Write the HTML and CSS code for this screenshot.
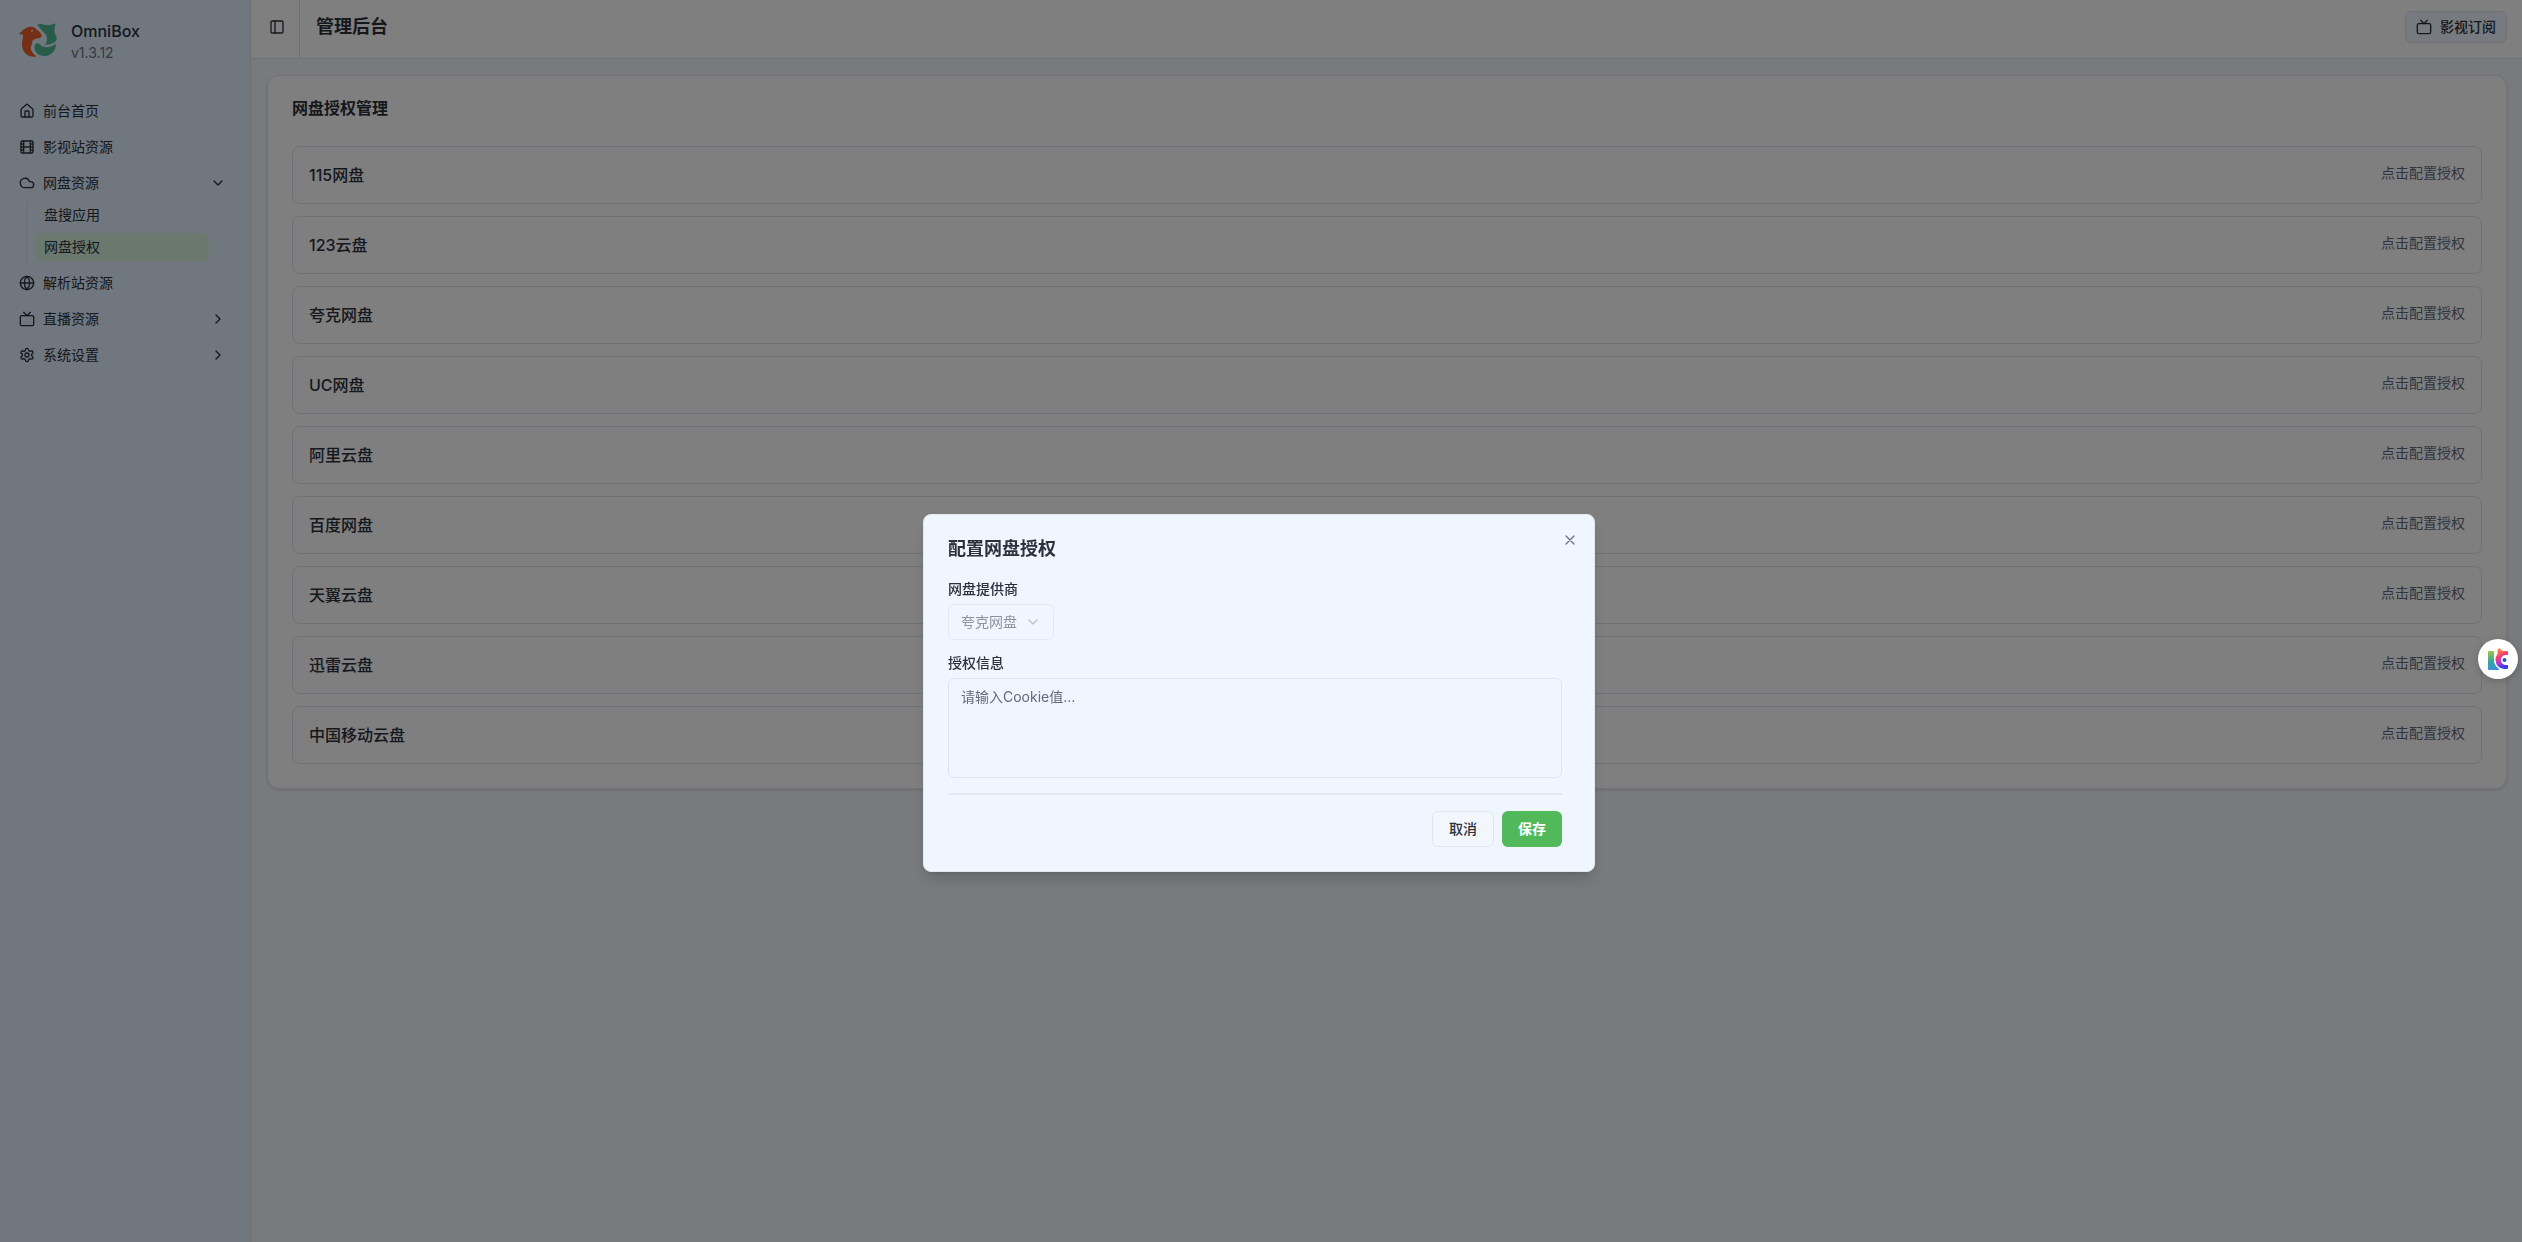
FILE: index.html
```
<!DOCTYPE html>
<html lang="zh-CN">
  <head>
    <meta charset="UTF-8" />
    <meta name="viewport" content="width=device-width, initial-scale=1.0" />
    <title>OmniBox</title>
    <link rel="stylesheet" href="styles.css">
  </head>
  <body>
    <div class="layout">
      <aside class="sidebar">
        <div class="brand">
          <svg class="logo" viewBox="0 0 40 36">
            <path fill="#e85f28" d="M0 10.500C3 9 5 5 10 4C14 3 16 5 18 7C21 9 23 11 22.500 14C20 16 17 15 15 16.500C12 18 14 21 12 23C11 27 14 31 17.500 33.500C10 34.500 5 31 3.500 25C2 19 4.500 15 4 12C3 11 1 12 0 10.500Z" />
            <path fill="#4fb890" d="M18 2C21 0 24 1.500 27 2C29 3 32 1.500 36.500 0.500C36 4 35 7 35.500 9C36 12 38.500 14 37.500 17C36 20 31 22 26 21.500C29 18 28.500 13 25.500 10C22 7 21 4 18 2Z" />
            <path fill="#4fb890" d="M15.500 25C15 21 18 19 20.500 21C24 25.500 31 25 37 21C37 28 32 32.500 26 33C20 33 16 30 15.500 25Z" />
            <circle cx="13" cy="7.800" r="0.900" fill="#fff" />
          </svg>
          <div>
            <div class="brand-name">OmniBox</div>
            <div class="brand-version">v1.3.12</div>
          </div>
        </div>

        <nav class="menu">
          <a class="menu-item">
            <svg class="icon" viewBox="0 0 24 24"><path d="M15 21v-8a1 1 0 0 0-1-1h-4a1 1 0 0 0-1 1v8" /><path d="M3 10a2 2 0 0 1 .7-1.5l7-6a2 2 0 0 1 2.6 0l7 6A2 2 0 0 1 21 10v9a2 2 0 0 1-2 2H5a2 2 0 0 1-2-2z" /></svg>
            <span>前台首页</span>
          </a>
          <a class="menu-item">
            <svg class="icon" viewBox="0 0 24 24"><rect width="18" height="18" x="3" y="3" rx="2" /><path d="M7 3v18M3 7.500h4M3 12h18M3 16.500h4M17 3v18M17 7.500h4M17 16.500h4" /></svg>
            <span>影视站资源</span>
          </a>
          <a class="menu-item">
            <svg class="icon" viewBox="0 0 24 24"><path d="M17.500 19H9a7 7 0 1 1 6.710-9h1.790a4.500 4.500 0 1 1 0 9Z" /></svg>
            <span>网盘资源</span>
            <svg class="icon chevron" viewBox="0 0 24 24"><path d="m6 9 6 6 6-6" /></svg>
          </a>
          <div class="submenu">
            <a class="submenu-item">盘搜应用</a>
            <a class="submenu-item active">网盘授权</a>
          </div>
          <a class="menu-item">
            <svg class="icon" viewBox="0 0 24 24"><circle cx="12" cy="12" r="10" /><path d="M12 2a14.500 14.500 0 0 0 0 20 14.500 14.500 0 0 0 0-20M2 12h20" /></svg>
            <span>解析站资源</span>
          </a>
          <a class="menu-item">
            <svg class="icon" viewBox="0 0 24 24"><rect width="20" height="15" x="2" y="7" rx="2" /><path d="m17 2-5 5-5-5" /></svg>
            <span>直播资源</span>
            <svg class="icon chevron" viewBox="0 0 24 24"><path d="m9 18 6-6-6-6" /></svg>
          </a>
          <a class="menu-item">
            <svg class="icon" viewBox="0 0 24 24"><path d="M12.220 2h-.44a2 2 0 0 0-2 2v.18a2 2 0 0 1-1 1.730l-.43.25a2 2 0 0 1-2 0l-.15-.08a2 2 0 0 0-2.730.73l-.22.38a2 2 0 0 0 .73 2.730l.15.1a2 2 0 0 1 1 1.720v.51a2 2 0 0 1-1 1.740l-.15.09a2 2 0 0 0-.73 2.730l.22.38a2 2 0 0 0 2.730.73l.15-.08a2 2 0 0 1 2 0l.43.25a2 2 0 0 1 1 1.730V20a2 2 0 0 0 2 2h.44a2 2 0 0 0 2-2v-.18a2 2 0 0 1 1-1.730l.43-.25a2 2 0 0 1 2 0l.15.08a2 2 0 0 0 2.730-.73l.22-.39a2 2 0 0 0-.73-2.730l-.15-.08a2 2 0 0 1-1-1.740v-.5a2 2 0 0 1 1-1.740l.15-.09a2 2 0 0 0 .73-2.730l-.22-.38a2 2 0 0 0-2.730-.73l-.15.08a2 2 0 0 1-2 0l-.43-.25a2 2 0 0 1-1-1.730V4a2 2 0 0 0-2-2z" /><circle cx="12" cy="12" r="3" /></svg>
            <span>系统设置</span>
            <svg class="icon chevron" viewBox="0 0 24 24"><path d="m9 18 6-6-6-6" /></svg>
          </a>
        </nav>
      </aside>

      <main class="main">
        <header class="topbar">
          <div class="toggle">
            <svg class="icon" viewBox="0 0 24 24"><rect width="18" height="18" x="3" y="3" rx="2" /><path d="M9 3v18" /></svg>
          </div>
          <h1>管理后台</h1>
          <button class="subscribe">
            <svg class="icon" viewBox="0 0 24 24"><rect width="20" height="15" x="2" y="7" rx="2" /><path d="m17 2-5 5-5-5" /></svg>
            影视订阅
          </button>
        </header>

        <section class="card">
          <h2>网盘授权管理</h2>
          <div class="drive-list">
            <div class="drive"><h3>115网盘</h3><span>点击配置授权</span></div>
            <div class="drive"><h3>123云盘</h3><span>点击配置授权</span></div>
            <div class="drive"><h3>夸克网盘</h3><span>点击配置授权</span></div>
            <div class="drive"><h3>UC网盘</h3><span>点击配置授权</span></div>
            <div class="drive"><h3>阿里云盘</h3><span>点击配置授权</span></div>
            <div class="drive"><h3>百度网盘</h3><span>点击配置授权</span></div>
            <div class="drive"><h3>天翼云盘</h3><span>点击配置授权</span></div>
            <div class="drive"><h3>迅雷云盘</h3><span>点击配置授权</span></div>
            <div class="drive"><h3>中国移动云盘</h3><span>点击配置授权</span></div>
          </div>
        </section>
      </main>
    </div>

    <div class="overlay">
      <div class="dialog">
        <svg class="icon close" viewBox="0 0 24 24"><path d="M18 6 6 18M6 6l12 12" /></svg>
        <h2>配置网盘授权</h2>
        <label>网盘提供商</label>
        <div class="select">
          夸克网盘
          <svg class="icon" viewBox="0 0 24 24"><path d="m6 9 6 6 6-6" /></svg>
        </div>
        <label>授权信息</label>
        <textarea placeholder="请输入Cookie值..."></textarea>
        <div class="actions">
          <button class="btn">取消</button>
          <button class="btn primary">保存</button>
        </div>
      </div>
    </div>

    <div class="float-badge">
      <svg viewBox="0 0 20 22">
        <defs>
          <linearGradient id="gl" x1="0" y1="0" x2="0" y2="1"><stop offset="0" stop-color="#9cc63c" /><stop offset="0.55" stop-color="#35a79b" /><stop offset="1" stop-color="#3b8edb" /></linearGradient>
          <linearGradient id="gc" x1="0" y1="0" x2="0.3" y2="1"><stop offset="0" stop-color="#fbb034" /><stop offset="0.45" stop-color="#f5426c" /><stop offset="0.75" stop-color="#a53be0" /><stop offset="1" stop-color="#3c3ce8" /></linearGradient>
        </defs>
        <path fill="url(#gl)" d="M1 3h4q1 0 1 1v10q1 4 5 7v1H1q-1 0-1-1V4q0-1 1-1z" />
        <path fill="url(#gc)" d="M9.500 1.500l2-1.500 3 3H19q1 0 1 1v3h-3q-4 1-4 5t4 5h3v3q0 1-1 1h-3q-8-1-8.500-9 0-4 2-6z" />
        <circle cx="16.500" cy="12" r="2" fill="#2458b8" />
      </svg>
    </div>
  </body>
</html>
```
FILE: styles.css
```
* {
  box-sizing: border-box;
}

body {
  margin: 0;
  font-family: Inter, "Noto Sans CJK SC", sans-serif;
  font-size: 14px;
  line-height: 20px;
  color: #2b303b;
  background: #f1f5fb;
}

h1,
h2,
h3 {
  margin: 0;
  font-weight: 600;
}

.icon {
  width: 16px;
  height: 16px;
  flex: none;
  fill: none;
  stroke: currentColor;
  stroke-width: 2;
  stroke-linecap: round;
  stroke-linejoin: round;
}

.layout {
  display: flex;
  height: 100vh;
}

/* sidebar */
.sidebar {
  width: 251px;
  flex: none;
  padding: 16px;
  border-right: 1px solid #dadee4;
  background: #e0effc;
}

.brand {
  display: flex;
  align-items: center;
  gap: 12px;
  height: 50px;
  padding-left: 3px;
}

.logo {
  width: 40px;
  height: 36px;
}

.brand-name {
  font-size: 16px;
  line-height: 24px;
  font-weight: 500;
}

.brand-version {
  color: #6c7280;
}

.menu {
  margin-top: 27px;
}

.menu-item {
  display: flex;
  align-items: center;
  gap: 8px;
  height: 36px;
  padding: 0 8px 0 3px;
}

.chevron {
  margin-left: auto;
}

.submenu {
  margin: 0 25px 0 10px;
  padding: 0 0 4px 9px;
  border-left: 1px solid #dadee4;
}

.submenu-item {
  display: flex;
  align-items: center;
  height: 28px;
  padding-left: 8px;
  border-radius: 6px;
}

.submenu-item + .submenu-item {
  margin-top: 4px;
}

.submenu-item.active {
  background: #d4f0dc;
}

/* main */
.main {
  flex: 1;
  min-width: 0;
}

.topbar {
  display: flex;
  align-items: center;
  height: 59px;
  padding-right: 15px;
  padding-bottom: 5px;
  border-bottom: 1px solid #dfe3ea;
  background: #fff;
}

.toggle {
  display: flex;
  align-items: center;
  justify-content: center;
  align-self: stretch;
  width: 49px;
  margin-bottom: -5px;
  padding: 0 0 5px 3px;
  border-right: 1px solid #dfe3ea;
}

.topbar h1 {
  margin-left: 16px;
  font-size: 18px;
  line-height: 28px;
}

.subscribe {
  display: flex;
  align-items: center;
  gap: 8px;
  height: 32px;
  margin-left: auto;
  padding: 0 10px;
  border: 1px solid #dfe3ea;
  border-radius: 6px;
  background: #eff6ff;
  color: inherit;
  font: inherit;
  font-weight: 500;
}

.card {
  margin: 16px 15px 0 16px;
  padding: 20px 24px 24px;
  border: 1px solid #e5e7eb;
  border-radius: 12px;
  background: #fff;
  box-shadow: 0 1px 3px rgba(0, 0, 0, 0.15);
}

.card h2 {
  font-size: 16px;
  line-height: 24px;
}

.drive-list {
  display: grid;
  gap: 12px;
  margin-top: 26px;
}

.drive {
  display: flex;
  justify-content: space-between;
  height: 58px;
  padding: 16px;
  border: 1px solid #e1e3e8;
  border-radius: 8px;
}

.drive h3 {
  font-size: 16px;
  line-height: 24px;
  font-weight: 500;
}

.drive span {
  color: #646a78;
}

/* dialog */
.overlay {
  position: fixed;
  inset: 0;
  display: flex;
  align-items: center;
  justify-content: center;
  padding: 144px 4px 0 0;
  background: rgba(0, 0, 0, 0.5);
}

.dialog {
  position: relative;
  width: 672px;
  height: 358px;
  padding: 20px 32px 24px 24px;
  border: 1px solid #e5e7eb;
  border-radius: 8px;
  background: #eff6ff;
  box-shadow: 0 10px 15px -3px rgba(0, 0, 0, 0.15), 0 4px 6px -4px rgba(0, 0, 0, 0.15);
}

.close {
  position: absolute;
  top: 17px;
  right: 16px;
  color: #6c7280;
}

.dialog h2 {
  margin-bottom: 16px;
  font-size: 18px;
  line-height: 28px;
}

.dialog label {
  display: block;
  margin-bottom: 5px;
  font-weight: 500;
}

.select {
  display: flex;
  align-items: center;
  justify-content: space-between;
  width: 106px;
  height: 36px;
  margin-bottom: 13px;
  padding: 0 12px;
  border: 1px solid #d9dce4;
  border-radius: 6px;
  opacity: 0.5;
}

.select .icon {
  opacity: 0.5;
}

textarea {
  display: block;
  width: 100%;
  height: 100px;
  padding: 8px 12px;
  border: 1px solid #e0e3ec;
  border-radius: 6px;
  background: transparent;
  font: inherit;
  resize: none;
}

textarea::placeholder {
  color: #646a78;
}

.actions {
  display: flex;
  justify-content: flex-end;
  gap: 8px;
  margin-top: 15px;
  padding-top: 16px;
  border-top: 2px solid #e5e9f1;
}

.btn {
  height: 36px;
  padding: 0 16px;
  border: 1px solid #e2e5ed;
  border-radius: 6px;
  background: #f2f6fd;
  color: inherit;
  font: inherit;
  font-weight: 500;
}

.btn.primary {
  border: none;
  background: #52b95b;
  color: #fff;
  font-weight: 700;
}

.float-badge {
  position: fixed;
  top: 639px;
  right: 4px;
  display: flex;
  align-items: center;
  justify-content: center;
  width: 40px;
  height: 40px;
  border-radius: 50%;
  background: #fff;
  box-shadow: 0 2px 8px rgba(0, 0, 0, 0.2);
}

.float-badge svg {
  width: 20px;
  height: 22px;
}
```
